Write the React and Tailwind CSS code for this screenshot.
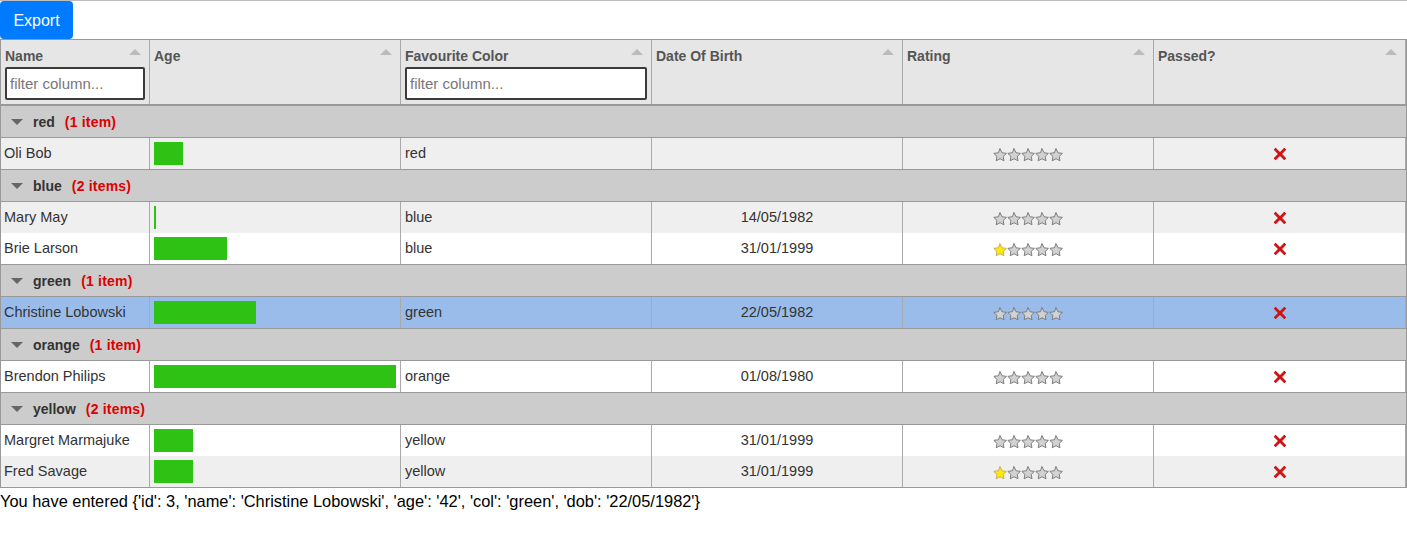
import React from 'react';

const groups = [
  { name: 'red', rows: [{ name: 'Oli Bob', age: 12, col: 'red', dob: '', rating: 0, bg: 'bg-[#efefef]' }] },
  {
    name: 'blue',
    rows: [
      { name: 'Mary May', age: 1, col: 'blue', dob: '14/05/1982', rating: 0, bg: 'bg-[#efefef]' },
      { name: 'Brie Larson', age: 30, col: 'blue', dob: '31/01/1999', rating: 1, bg: 'bg-white' },
    ],
  },
  { name: 'green', rows: [{ name: 'Christine Lobowski', age: 42, col: 'green', dob: '22/05/1982', rating: 0, bg: 'bg-[#9abcea]' }] },
  { name: 'orange', rows: [{ name: 'Brendon Philips', age: 100, col: 'orange', dob: '01/08/1980', rating: 0, bg: 'bg-white' }] },
  {
    name: 'yellow',
    rows: [
      { name: 'Margret Marmajuke', age: 16, col: 'yellow', dob: '31/01/1999', rating: 0, bg: 'bg-white' },
      { name: 'Fred Savage', age: 16, col: 'yellow', dob: '31/01/1999', rating: 1, bg: 'bg-[#efefef]' },
    ],
  },
];

const Star = ({ on }) => (
  <svg width="14" height="14" viewBox="0 0 512 512">
    <polygon
      fill={on ? '#FFEA00' : '#D2D2D2'}
      stroke={on ? '#C1AB60' : '#777'}
      strokeWidth="34"
      strokeLinecap="round"
      strokeLinejoin="round"
      strokeMiterlimit="10"
      points="259.216,29.942 330.27,173.919 489.16,197.007 374.185,309.08 401.33,467.31 259.216,392.612 117.104,467.31 144.25,309.08 29.274,197.007 188.165,173.919"
    />
  </svg>
);

const Cross = () => (
  <svg width="14" height="14" viewBox="0 0 24 24">
    <path
      fill="#CE1515"
      d="M22.245,4.015c0.313,0.313,0.313,0.826,0,1.139l-6.276,6.27c-0.313,0.312-0.313,0.826,0,1.14l6.273,6.272c0.313,0.313,0.313,0.826,0,1.14l-2.285,2.277c-0.314,0.312-0.828,0.312-1.142,0l-6.271-6.271c-0.313-0.313-0.828-0.313-1.141,0l-6.276,6.267c-0.313,0.313-0.828,0.313-1.141,0l-2.282-2.28c-0.313-0.313-0.313-0.826,0-1.14l6.278-6.269c0.313-0.312,0.313-0.826,0-1.14L1.709,5.147c-0.314-0.313-0.314-0.827,0-1.14l2.284-2.278C4.308,1.417,4.821,1.417,5.135,1.73L11.405,8c0.314,0.314,0.827,0.314,1.141,0.001l6.276-6.267c0.312-0.312,0.826-0.312,1.141,0L22.245,4.015z"
    />
  </svg>
);

const SortArrow = () => (
  <div className="absolute top-[9px] right-[8px] w-0 h-0 border-l-[6px] border-r-[6px] border-b-[6px] border-l-transparent border-r-transparent border-b-[#bbb]" />
);

const HeaderCol = ({ title, width, filter }) => (
  <div className={`relative ${width} shrink-0 border-r border-[#aaa] p-[4px]`}>
    <div className="h-[21px] leading-[24px] font-bold text-[#555] text-[14px]">{title}</div>
    {filter && (
      <input
        className="mt-[2px] block w-full h-[33px] border-2 border-[#3b3b3b] rounded-[2px] bg-white px-[3px] text-[15px] text-[#333] placeholder:text-[#777] outline-none"
        placeholder="filter column..."
      />
    )}
    <SortArrow />
  </div>
);

const cols = ['w-[149px]', 'w-[251px]', 'w-[251px]', 'w-[251px]', 'w-[251px]', 'flex-1'];

const GroupRow = ({ name, count }) => (
  <div className="h-[33px] bg-[#ccc] border-y border-[#999] flex items-center pl-[10px] text-[14px] font-bold text-[#333]">
    <div className="w-0 h-0 border-l-[6px] border-r-[6px] border-t-[6px] border-l-transparent border-r-transparent border-t-[#666] mr-[10px] mt-[1px]" />
    <span className="pt-[1px]">{name}</span>
    <span className="ml-[10px] pt-[1px] text-[#d00] tracking-[0.2px]">({count} {count === 1 ? 'item' : 'items'})</span>
  </div>
);

const DataRow = ({ r }) => (
  <div className={`h-[31px] flex text-[14.5px] text-[#333] ${r.bg}`}>
    <div className={`${cols[0]} shrink-0 border-r border-[#aaa] pl-[3px] pr-[4px] flex items-center`}>{r.name}</div>
    <div className={`${cols[1]} shrink-0 border-r border-[#aaa] p-[4px]`}>
      <div className="h-full bg-[#2dc214]" style={{ width: `${r.age}%` }} />
    </div>
    <div className={`${cols[2]} shrink-0 border-r border-[#aaa] px-[4px] flex items-center`}>{r.col}</div>
    <div className={`${cols[3]} shrink-0 border-r border-[#aaa] px-[4px] flex items-center justify-center`}>{r.dob}</div>
    <div className={`${cols[4]} shrink-0 border-r border-[#aaa] px-[4px] flex items-center justify-center pt-[3px]`}>
      {[0, 1, 2, 3, 4].map((i) => (
        <Star key={i} on={i < r.rating} />
      ))}
    </div>
    <div className={`${cols[5]} border-r border-[#aaa] px-[4px] flex items-center justify-center`}>
      <Cross />
    </div>
  </div>
);

export default function App() {
  return (
    <div className="w-[1407px] h-[543px] bg-white border-t border-[#bdbdbd] font-['Liberation_Sans',Arial,sans-serif] overflow-hidden">
      <button className="h-[38px] w-[73px] bg-[#007bff] text-white text-[16px] leading-[40px] rounded-[4px] block">Export</button>

      <div className="border border-[#999] bg-white">
        <div className="flex h-[65px] bg-[#e6e6e6] border-b border-[#999]">
          <HeaderCol title="Name" width={cols[0]} filter />
          <HeaderCol title="Age" width={cols[1]} />
          <HeaderCol title="Favourite Color" width={cols[2]} filter />
          <HeaderCol title="Date Of Birth" width={cols[3]} />
          <HeaderCol title="Rating" width={cols[4]} />
          <HeaderCol title="Passed?" width="flex-1" />
        </div>

        {groups.map((g) => (
          <div key={g.name}>
            <GroupRow name={g.name} count={g.rows.length} />
            {g.rows.map((r) => (
              <DataRow key={r.name} r={r} />
            ))}
          </div>
        ))}
      </div>

      <div className="text-[16.4px] text-black leading-[26px]">
        You have entered {"{'id': 3, 'name': 'Christine Lobowski', 'age': '42', 'col': 'green', 'dob': '22/05/1982'}"}
      </div>
    </div>
  );
}
